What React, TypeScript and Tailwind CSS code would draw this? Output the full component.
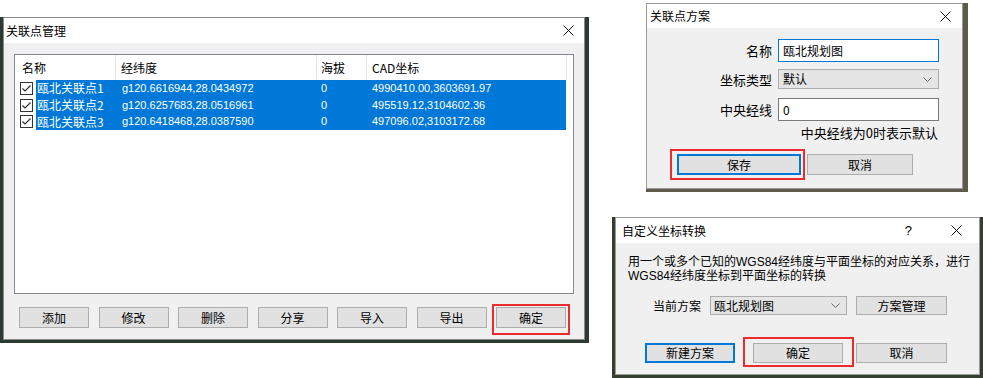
import React from 'react';

const rows = [
  { name: '瓯北关联点1', lnglat: 'g120.6616944,28.0434972', alt: '0', cad: '4990410.00,3603691.97' },
  { name: '瓯北关联点2', lnglat: 'g120.6257683,28.0516961', alt: '0', cad: '495519.12,3104602.36' },
  { name: '瓯北关联点3', lnglat: 'g120.6418468,28.0387590', alt: '0', cad: '497096.02,3103172.68' },
];

const num = "font-['Liberation_Sans','Noto_Sans_CJK_SC',sans-serif] text-[11px]";

const CloseX = () => (
  <svg width="11" height="11" viewBox="0 0 11 11">
    <path d="M0.5 0.5L10.5 10.5M10.5 0.5L0.5 10.5" stroke="#111" strokeWidth="1" fill="none" />
  </svg>
);

const Chevron = () => (
  <svg width="9" height="5" viewBox="0 0 9 5">
    <path d="M0.5 0.5L4.5 4.5L8.5 0.5" stroke="#666" strokeWidth="1" fill="none" />
  </svg>
);

const Check = () => (
  <svg width="13" height="13" viewBox="0 0 13 13">
    <rect x="0.5" y="0.5" width="12" height="12" fill="#fff" stroke="#333" />
    <path d="M2.5 6.5L5 9L10.5 3.5" stroke="#333" strokeWidth="1.2" fill="none" />
  </svg>
);

const Btn = ({ label, w, primary }: { label: string; w: string; primary?: boolean }) => (
  <div
    className={`${w} h-[21px] flex items-center justify-center bg-[#e1e1e1] text-[12px] leading-none text-black ${
      primary ? 'border-2 border-[#0078d7]' : 'border border-[#adadad]'
    }`}
  >
    {label}
  </div>
);

// red annotation frame drawn over a button
const Marked = ({ children, box }: { children: React.ReactNode; box: string }) => (
  <div className="relative">
    {children}
    <div className={`absolute border-2 border-[#ec2b30] ${box}`} />
  </div>
);

export default function App() {
  return (
    <div className="relative w-[983px] h-[378px] bg-white overflow-hidden font-['Noto_Sans_CJK_SC',sans-serif] text-black">
      {/* 关联点管理 */}
      <div className="absolute left-0 top-[17px] w-[589px] h-[326px] bg-[#2c3a31] pl-[3px]">
        <div className="w-[582px] h-[323px] border border-[#8a8a8a] bg-[#f0f0f0] flex flex-col">
          <div className="h-[25px] bg-white flex items-center justify-between pl-[2px] pr-[10px]">
            <span className="text-[12px] leading-none">关联点管理</span>
            <CloseX />
          </div>
          <div className="px-[10px] pt-[11px]">
            <div className="w-[560px] h-[240px] border border-[#828790] bg-white">
              <div className="h-[25px] flex text-[12px] leading-none">
                <div className="w-[101px] border-r border-[#e5e5e5] pl-[7px] flex items-center">名称</div>
                <div className="w-[201px] border-r border-[#e5e5e5] pl-[5px] flex items-center">经纬度</div>
                <div className="w-[50px] border-r border-[#e5e5e5] pl-[4px] flex items-center">海拔</div>
                <div className="w-[200px] border-r border-[#e5e5e5] pl-[5px] flex items-center">CAD坐标</div>
              </div>
              {rows.map(r => (
                <div key={r.name} className="h-[16.7px] flex">
                  <div className="w-[21px] pl-[5px] flex items-center">
                    <Check />
                  </div>
                  <div className="w-[530px] bg-[#0078d7] text-white flex items-center">
                    <div className="w-[80px] pl-[1px] text-[12px] leading-none">{r.name}</div>
                    <div className={`w-[201px] pl-[6px] leading-none ${num}`}>{r.lnglat}</div>
                    <div className={`w-[50px] pl-[4px] leading-none ${num}`}>{r.alt}</div>
                    <div className={`pl-[5px] leading-none ${num}`}>{r.cad}</div>
                  </div>
                </div>
              ))}
            </div>
            <div className="mt-[13px] ml-[5px] w-[547px] flex justify-between">
              <Btn label="添加" w="w-[70px]" />
              <Btn label="修改" w="w-[70px]" />
              <Btn label="删除" w="w-[70px]" />
              <Btn label="分享" w="w-[70px]" />
              <Btn label="导入" w="w-[70px]" />
              <Btn label="导出" w="w-[70px]" />
              <Marked box="-left-[4px] -right-[4px] -top-[3px] -bottom-[7px]">
                <Btn label="确定" w="w-[70px]" />
              </Marked>
            </div>
          </div>
        </div>
      </div>

      {/* 关联点方案 */}
      <div className="absolute left-[646px] top-[3px] w-[322px] h-[189px] bg-[#5e5a4a]">
        <div className="w-[317px] h-[186px] border border-[#9a9a9a] bg-[#f0f0f0] flex flex-col">
          <div className="h-[24px] bg-white flex items-center justify-between pl-[3px] pr-[11px]">
            <span className="text-[12px] leading-none">关联点方案</span>
            <CloseX />
          </div>
          <div className="pt-[11px] text-[13px] leading-none">
            <div className="flex items-center">
              <div className="w-[125px] text-right">名称</div>
              <div className="ml-[6px] w-[161px] h-[23px] bg-white border border-[#0078d7] flex items-center pl-[4px] text-[12px]">瓯北规划图</div>
            </div>
            <div className="mt-[7px] flex items-center">
              <div className="w-[125px] text-right">坐标类型</div>
              <div className="ml-[6px] w-[161px] h-[20px] bg-[#e5e5e5] border border-[#acacac] flex items-center justify-between pl-[4px] pr-[6px] text-[12px]">
                <span>默认</span>
                <Chevron />
              </div>
            </div>
            <div className="mt-[9px] flex items-center">
              <div className="w-[125px] text-right">中央经线</div>
              <div className="ml-[6px] w-[161px] h-[23px] bg-white border border-[#7a7a7a] flex items-center pl-[4px] text-[12px]">0</div>
            </div>
            <div className="mt-[5px] w-[291px] h-[14px] text-right">中央经线为0时表示默认</div>
            <div className="mt-[14px] ml-[30px] flex gap-[6px]">
              <Marked box="-left-[7px] -right-[4px] -top-[5px] -bottom-[5px]">
                <Btn label="保存" w="w-[124px]" primary />
              </Marked>
              <Btn label="取消" w="w-[106px]" />
            </div>
          </div>
        </div>
      </div>

      {/* 自定义坐标转换 */}
      <div className="absolute left-[612px] top-[217px] w-[371px] h-[161px] bg-[#34402f] pl-[3px]">
        <div className="w-[365px] h-[158px] border border-[#9a9a9a] bg-[#f0f0f0] flex flex-col">
          <div className="h-[25px] bg-white flex items-center pl-[6px] pr-[17px]">
            <span className="text-[12px] leading-none flex-1">自定义坐标转换</span>
            <span className="mr-[39px] text-[13px] leading-none font-['Liberation_Sans',sans-serif]">?</span>
            <CloseX />
          </div>
          <div className="pl-[12px] pt-[12px] text-[12px] leading-[14px] font-['Liberation_Sans','Noto_Sans_CJK_SC',sans-serif]">
            <div>用一个或多个已知的WGS84经纬度与平面坐标的对应关系，进行</div>
            <div>WGS84经纬度坐标到平面坐标的转换</div>
          </div>
          <div className="mt-[13px] ml-[37px] flex items-center text-[12px] leading-none">
            <span className="w-[48px]">当前方案</span>
            <div className="ml-[9px] w-[137px] h-[19px] bg-[#e5e5e5] border border-[#acacac] flex items-center justify-between pl-[3px] pr-[6px]">
              <span>瓯北规划图</span>
              <Chevron />
            </div>
            <div className="ml-[9px] w-[91px] h-[19px] bg-[#e1e1e1] border border-[#adadad] flex items-center justify-center">方案管理</div>
          </div>
          <div className="mt-[28px] ml-[29px] flex">
            <Btn label="新建方案" w="w-[90px] !h-[20px]" primary />
            <div className="ml-[18px]">
              <Marked box="-left-[10px] -right-[11px] -top-[6px] -bottom-[4px]">
                <Btn label="确定" w="w-[90px] !h-[20px]" />
              </Marked>
            </div>
            <div className="ml-[13px]">
              <Btn label="取消" w="w-[91px] !h-[20px]" />
            </div>
          </div>
        </div>
      </div>
    </div>
  );
}
